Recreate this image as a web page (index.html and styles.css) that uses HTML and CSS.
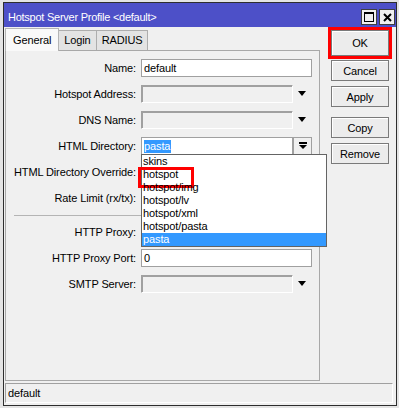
FILE: index.html
```html
<html>
    <head>
        <meta name="viewport" content="width=device-width, initial-scale=1.0">
        <title>Hotspot Server Profile</title>
        <link rel="stylesheet" href="styles.css">
    </head>
    <body>
        <div class="window">
            <div class="titlebar">
                <span class="title">Hotspot Server Profile &lt;default&gt;</span>
                <div class="tbtns">
                    <span class="tbtn">
                        <svg width="10" height="10" viewBox="0 0 10 10"><rect x="0.5" y="0.5" width="9" height="9" fill="none" stroke="#000"/><rect x="0" y="0" width="10" height="2" fill="#000"/></svg>
                    </span>
                    <span class="tbtn">
                        <svg width="9" height="9" viewBox="0 0 9 9"><path d="M1 1L8 8M8 1L1 8" stroke="#000" stroke-width="2"/></svg>
                    </span>
                </div>
            </div>
            <div class="content">
                <div class="main">
                    <div class="tabsarea">
                        <div class="tabs">
                            <div class="tab active">General</div>
                            <div class="tab">Login</div>
                            <div class="tab">RADIUS</div>
                        </div>
                        <div class="panel">
                            <div class="row">
                                <label>Name:</label>
                                <div class="field wide">default</div>
                            </div>
                            <div class="row">
                                <label>Hotspot Address:</label>
                                <div class="field off"></div>
                                <span class="arrow"></span>
                            </div>
                            <div class="row">
                                <label>DNS Name:</label>
                                <div class="field off"></div>
                                <span class="arrow"></span>
                            </div>
                            <div class="row">
                                <label>HTML Directory:</label>
                                <div class="field"><span class="sel">pasta</span></div>
                                <span class="dropbtn">
                                    <svg width="8" height="8" viewBox="0 0 8 8"><rect x="0" y="0" width="8" height="2" fill="#000"/><path d="M0 3H8L4 7Z" fill="#000"/></svg>
                                </span>
                                <div class="list">
                                    <div class="item">skins</div>
                                    <div class="item marked">hotspot</div>
                                    <div class="item">hotspot/img</div>
                                    <div class="item">hotspot/lv</div>
                                    <div class="item">hotspot/xml</div>
                                    <div class="item">hotspot/pasta</div>
                                    <div class="item current">pasta</div>
                                </div>
                            </div>
                            <div class="row">
                                <label>HTML Directory Override:</label>
                                <div class="field wide"></div>
                            </div>
                            <div class="row">
                                <label>Rate Limit (rx/tx):</label>
                                <div class="field"></div>
                                <span class="arrow"></span>
                            </div>
                            <div class="sep"></div>
                            <div class="row">
                                <label>HTTP Proxy:</label>
                                <div class="field"></div>
                                <span class="arrow"></span>
                            </div>
                            <div class="row">
                                <label>HTTP Proxy Port:</label>
                                <div class="field wide">0</div>
                            </div>
                            <div class="row">
                                <label>SMTP Server:</label>
                                <div class="field off"></div>
                                <span class="arrow"></span>
                            </div>
                        </div>
                    </div>
                    <div class="actions">
                        <button class="btn ok">OK</button>
                        <button class="btn">Cancel</button>
                        <button class="btn">Apply</button>
                        <button class="btn group">Copy</button>
                        <button class="btn">Remove</button>
                    </div>
                </div>
                <div class="status">default</div>
            </div>
        </div>
    </body>
</html>
```

FILE: styles.css
```css
*{
    margin: 0;
    padding: 0;
    box-sizing: border-box;
}
body{
    background-color: #e4e4e4;
    font-family: "Liberation Sans", Arial, sans-serif;
    font-size: 11px;
    letter-spacing: -0.12px;
    color: #000;
}
.window{
    width: 394px;
    height: 404px;
    margin: 2px 0 0 3px;
    border: 1px solid #2e2e2e;
    background-color: #f0f0f0;
    display: flex;
    flex-direction: column;
}
.titlebar{
    height: 24px;
    background-color: #4d50c8;
    color: #fff;
    display: flex;
    align-items: flex-end;
    justify-content: space-between;
    padding: 0 1px 2px 4px;
}
.title{
    line-height: 16px;
    letter-spacing: -0.25px;
}
.tbtns{
    display: flex;
    gap: 2px;
}
.tbtn{
    width: 16px;
    height: 16px;
    background-color: #f0f0f0;
    border: 1px solid #404040;
    display: flex;
    align-items: center;
    justify-content: center;
}
.content{
    flex: 1;
    display: flex;
    flex-direction: column;
    padding: 0 2px 0 1px;
}
.main{
    display: flex;
    align-items: flex-start;
}
.tabsarea{
    width: 315px;
}
.tabs{
    display: flex;
    align-items: flex-end;
    height: 23px;
    padding-left: 1px;
}
.tab{
    height: 20px;
    line-height: 18px;
    padding: 0 5px;
    border: 1px solid #adadad;
    border-bottom: 0;
    background-color: #e3e3e3;
    margin-left: -1px;
}
.tab.active{
    height: 23px;
    padding: 0 7px;
    line-height: 22px;
    background-color: #f9f9f9;
    margin-bottom: -1px;
    position: relative;
    z-index: 1;
    border-color: #b4b4b4;
}
.panel{
    height: 331px;
    border: 1px solid #a8a8a8;
    background-color: #f0f0f0;
    padding-top: 8px;
}
.row{
    display: flex;
    align-items: center;
    height: 18px;
    margin-bottom: 8px;
    position: relative;
}
.row label{
    width: 130px;
    text-align: right;
    margin-right: 5px;
}
.field{
    width: 152px;
    height: 18px;
    border: 1px solid #a0a0a0;
    background-color: #fff;
    padding-left: 2px;
    line-height: 16px;
}
.field.wide{
    width: 171px;
}
.field.off{
    background-color: #f0f0f0;
    border-right-color: #fff;
    border-bottom-color: #fff;
    box-shadow: inset 1px 1px 0 #a0a0a0;
}
.sel{
    background-color: #3399ff;
    color: #fff;
    padding: 0 1px 1px 0;
}
.arrow{
    width: 0;
    height: 0;
    margin-left: 5px;
    border-left: 4.5px solid transparent;
    border-right: 4.5px solid transparent;
    border-top: 5px solid #000;
    align-self: flex-start;
    margin-top: 6px;
}
.dropbtn{
    width: 19px;
    height: 18px;
    border: 1px solid #a0a0a0;
    background-color: #f0f0f0;
    display: flex;
    align-items: center;
    justify-content: center;
}
.list{
    position: absolute;
    top: 17px;
    left: 135px;
    width: 186px;
    border: 1px solid #646464;
    background-color: #fff;
    z-index: 2;
}
.item{
    height: 13px;
    line-height: 13px;
    padding-left: 1px;
    position: relative;
}
.item.current{
    background-color: #3399ff;
    color: #fff;
}
.item.marked::after{
    content: "";
    position: absolute;
    left: -4px;
    top: -1px;
    width: 50px;
    height: 15px;
    border: 3px solid #f00;
}
.sep{
    height: 1px;
    background-color: #b4b4b4;
    margin: 1px 8px 7px 8px;
    width: 297px;
}
.actions{
    display: flex;
    flex-direction: column;
    margin-left: 11px;
    padding-top: 3px;
}
.btn{
    width: 58px;
    height: 21px;
    font-family: inherit;
    font-size: 11px;
    letter-spacing: -0.12px;
    border: 1px solid #7a7a7a;
    background-color: #ececec;
    box-shadow: inset 1px 1px 0 #fff;
    margin-bottom: 5px;
    color: #000;
}
.btn.ok{
    height: 26px;
    position: relative;
    margin-bottom: 4px;
}
.btn.ok::after{
    content: "";
    position: absolute;
    left: -4px;
    top: -4px;
    right: -4px;
    bottom: -4px;
    border: 3px solid #f00;
}
.btn.group{
    margin-top: 5px;
}
.status{
    margin-top: 2px;
    height: 20px;
    width: 388px;
    border: 1px solid #a0a0a0;
    border-right-color: #fff;
    border-bottom-color: #fff;
    padding-left: 2px;
    line-height: 18px;
}
```
